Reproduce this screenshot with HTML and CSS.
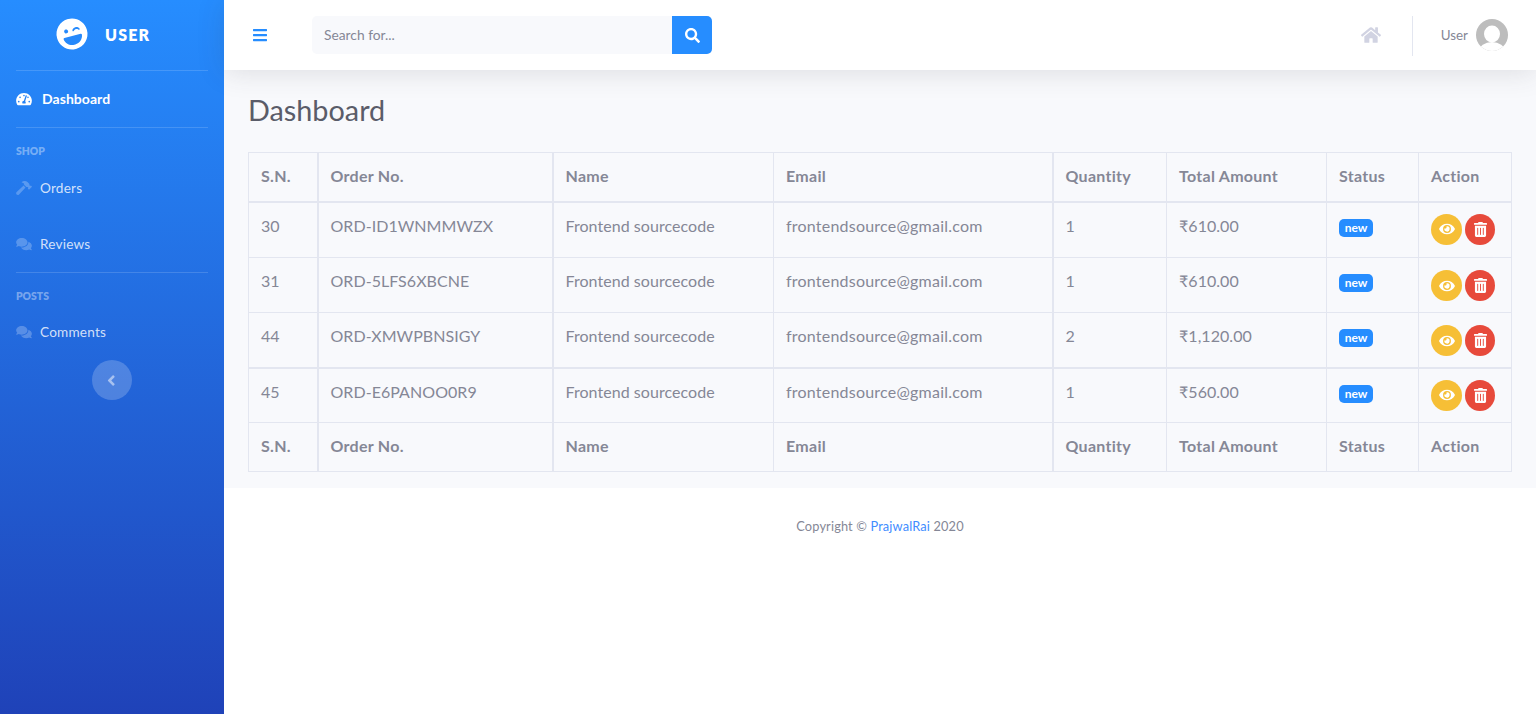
FILE: index.html
```html
<!DOCTYPE html>
<html>
<head>
    <title>Dashboard</title>
    <link rel="stylesheet" href="styles.css">
</head>
<body>
    <svg class="icon-defs" xmlns="http://www.w3.org/2000/svg">
        <symbol id="i-search" viewBox="0 0 512 512"><path d="M505 442.7L405.3 343c-4.5-4.5-10.6-7-17-7H372c27.6-35.3 44-79.7 44-128C416 93.1 322.9 0 208 0S0 93.1 0 208s93.1 208 208 208c48.3 0 92.7-16.4 128-44v16.3c0 6.4 2.5 12.5 7 17l99.7 99.7c9.4 9.4 24.6 9.4 33.9 0l28.3-28.3c9.4-9.4 9.4-24.6.1-34zM208 336c-70.7 0-128-57.2-128-128 0-70.7 57.2-128 128-128 70.7 0 128 57.2 128 128 0 70.7-57.2 128-128 128z"/></symbol>
        <symbol id="i-bars" viewBox="0 0 448 512"><path d="M16 132h416c8.837 0 16-7.163 16-16V76c0-8.837-7.163-16-16-16H16C7.163 60 0 67.163 0 76v40c0 8.837 7.163 16 16 16zm0 160h416c8.837 0 16-7.163 16-16v-40c0-8.837-7.163-16-16-16H16c-8.837 0-16 7.163-16 16v40c0 8.837 7.163 16 16 16zm0 160h416c8.837 0 16-7.163 16-16v-40c0-8.837-7.163-16-16-16H16c-8.837 0-16 7.163-16 16v40c0 8.837 7.163 16 16 16z"/></symbol>
        <symbol id="i-home" viewBox="0 0 576 512"><path d="M280.37 148.26L96 300.11V464a16 16 0 0 0 16 16l112.06-.29a16 16 0 0 0 15.92-16V368a16 16 0 0 1 16-16h64a16 16 0 0 1 16 16v95.64a16 16 0 0 0 16 16.05L464 480a16 16 0 0 0 16-16V300L295.67 148.26a12.19 12.19 0 0 0-15.3 0zM571.6 251.47L488 182.56V44.05a12 12 0 0 0-12-12h-56a12 12 0 0 0-12 12v72.61L318.47 43a48 48 0 0 0-61 0L4.34 251.47a12 12 0 0 0-1.6 16.9l25.5 31A12 12 0 0 0 45.15 301l235.22-193.74a12.19 12.19 0 0 1 15.3 0L530.9 301a12 12 0 0 0 16.9-1.6l25.5-31a12 12 0 0 0-1.7-16.93z"/></symbol>
        <symbol id="i-eye" viewBox="0 0 576 512"><path d="M572.52 241.4C518.29 135.59 410.93 64 288 64S57.68 135.64 3.48 241.41a32.35 32.35 0 0 0 0 29.19C57.71 376.41 165.07 448 288 448s230.32-71.64 284.52-177.41a32.35 32.35 0 0 0 0-29.19zM288 400a144 144 0 1 1 144-144 143.93 143.93 0 0 1-144 144zm0-240a95.31 95.31 0 0 0-25.31 3.79 47.85 47.85 0 0 1-66.9 66.9A95.78 95.78 0 1 0 288 160z"/></symbol>
        <symbol id="i-trash" viewBox="0 0 448 512"><path d="M32 464a48 48 0 0 0 48 48h288a48 48 0 0 0 48-48V128H32zm272-256a16 16 0 0 1 32 0v224a16 16 0 0 1-32 0zm-96 0a16 16 0 0 1 32 0v224a16 16 0 0 1-32 0zm-96 0a16 16 0 0 1 32 0v224a16 16 0 0 1-32 0zM432 32H312l-9.4-18.7A24 24 0 0 0 281.1 0H166.8a23.72 23.72 0 0 0-21.4 13.3L136 32H16A16 16 0 0 0 0 48v32a16 16 0 0 0 16 16h416a16 16 0 0 0 16-16V48a16 16 0 0 0-16-16z"/></symbol>
        <symbol id="i-comments" viewBox="0 0 576 512"><path d="M416 192c0-88.4-93.1-160-208-160S0 103.6 0 192c0 34.3 14.1 65.9 38 92-13.4 30.2-35.5 54.2-35.8 54.5-2.2 2.3-2.8 5.7-1.5 8.7S4.8 352 8 352c36.6 0 66.9-12.3 88.7-25 32.2 15.7 70.3 25 111.3 25 114.9 0 208-71.6 208-160zm122 220c23.9-26 38-57.7 38-92 0-66.9-53.5-124.2-129.3-148.1.9 6.6 1.3 13.3 1.3 20.1 0 105.9-107.7 192-240 192-10.8 0-21.3-.8-31.7-1.9C207.8 439.6 281.8 480 368 480c41 0 79.1-9.2 111.3-25 21.8 12.7 52.1 25 88.7 25 3.2 0 6.1-1.9 7.3-4.8 1.3-2.9.7-6.3-1.5-8.7-.3-.3-22.4-24.2-35.8-54.5z"/></symbol>
    </svg>

    <div class="wrapper">
        <aside class="sidebar">
            <a class="brand">
                <svg class="brand-icon" viewBox="0 0 496 512"><path d="M248 8C111 8 0 119 0 256s111 248 248 248 248-111 248-248S385 8 248 8zm20.1 198.1c4-25.2 34.2-42.1 59.9-42.1s55.9 16.9 59.9 42.1c1.7 11.1-11.4 18.3-19.8 10.8l-9.5-8.5c-14.8-13.2-46.2-13.2-61 0L288 217c-8.4 7.4-21.6.3-19.9-10.9zM168 160c17.7 0 32 14.3 32 32s-14.3 32-32 32-32-14.3-32-32 14.3-32 32-32zm230.9 146C390 377 329.4 432 256 432h-16c-73.4 0-134-55-142.9-126-1.2-9.5 6.3-18 15.9-18h270c9.6 0 17.1 8.4 15.9 18z"/></svg>
                <span class="brand-text">USER</span>
            </a>
            <hr class="side-divider">
            <a class="side-link active">
                <svg class="side-icon" viewBox="0 0 576 512"><path d="M288 32C128.94 32 0 160.94 0 320c0 52.8 14.25 102.26 39.06 144.8 5.61 9.62 16.3 15.2 27.44 15.2h443c11.14 0 21.83-5.58 27.44-15.2C561.75 422.26 576 372.8 576 320c0-159.06-128.94-288-288-288zm0 64c14.71 0 26.58 10.13 30.32 23.65-1.11 2.26-2.64 4.23-3.45 6.67l-9.22 27.67c-5.13 3.49-10.97 6.01-17.64 6.01-17.67 0-32-14.33-32-32S270.33 96 288 96zM96 384c-17.67 0-32-14.33-32-32s14.33-32 32-32 32 14.33 32 32-14.33 32-32 32zm48-160c-17.67 0-32-14.33-32-32s14.33-32 32-32 32 14.33 32 32-14.33 32-32 32zm246.77-72.41l-61.33 184C343.13 347.33 352 364.54 352 384c0 11.72-3.38 22.55-8.88 32H232.88c-5.5-9.45-8.88-20.28-8.88-32 0-33.94 26.5-61.43 59.9-63.59l61.34-184.01c4.17-12.56 17.73-19.45 30.36-15.17 12.57 4.19 19.35 17.79 15.17 30.36zm14.66 57.2l15.52-46.55c3.47-1.29 7.13-2.23 11.05-2.23 17.67 0 32 14.33 32 32s-14.33 32-32 32c-11.38-.01-20.89-6.28-26.57-15.22zM480 384c-17.67 0-32-14.33-32-32s14.33-32 32-32 32 14.33 32 32-14.33 32-32 32z"/></svg>
                <span>Dashboard</span>
            </a>
            <hr class="side-divider">
            <div class="side-heading">SHOP</div>
            <a class="side-link orders">
                <svg class="side-icon" viewBox="0 0 576 512"><path d="M571.31 193.94l-22.63-22.63c-6.25-6.25-16.38-6.25-22.63 0l-11.31 11.31-28.9-28.9c5.63-21.31.36-44.9-16.35-61.61l-45.25-45.25c-62.48-62.48-163.79-62.48-226.28 0l90.51 45.25v18.75c0 16.97 6.74 33.25 18.75 45.25l49.14 49.14c16.71 16.71 40.3 21.98 61.61 16.35l28.9 28.9-11.31 11.31c-6.25 6.25-6.25 16.38 0 22.63l22.63 22.63c6.25 6.25 16.38 6.25 22.63 0l90.51-90.51c6.23-6.24 6.23-16.37-.02-22.62zm-286.72-15.2c-3.7-3.7-6.84-7.79-9.85-11.95L19.64 404.96c-25.57 23.88-26.26 64.19-1.53 88.93s65.05 24.05 88.93-1.53l238.13-255.07c-3.96-2.91-7.9-5.87-11.44-9.41l-49.14-49.14z"/></svg>
                <span>Orders</span>
            </a>
            <a class="side-link">
                <svg class="side-icon"><use href="#i-comments"/></svg>
                <span>Reviews</span>
            </a>
            <hr class="side-divider">
            <div class="side-heading">POSTS</div>
            <a class="side-link comments">
                <svg class="side-icon"><use href="#i-comments"/></svg>
                <span>Comments</span>
            </a>
            <button class="side-toggle">
                <svg viewBox="0 0 256 512"><path d="M31.7 239l136-136c9.4-9.4 24.6-9.4 33.9 0l22.6 22.6c9.4 9.4 9.4 24.6 0 33.9L127.9 256l96.4 96.4c9.4 9.4 9.4 24.6 0 33.9L201.7 409c-9.4 9.4-24.6 9.4-33.9 0l-136-136c-9.5-9.4-9.5-24.6-.1-34z"/></svg>
            </button>
        </aside>

        <div class="main">
            <header class="topbar">
                <svg class="menu-icon"><use href="#i-bars"/></svg>
                <form class="search">
                    <input class="search-input" type="text" placeholder="Search for...">
                    <button class="search-btn" type="button"><svg><use href="#i-search"/></svg></button>
                </form>
                <div class="top-right">
                    <svg class="home-icon"><use href="#i-home"/></svg>
                    <div class="top-divider"></div>
                    <span class="user-name">User</span>
                    <svg class="avatar" viewBox="0 0 32 32">
                        <defs><clipPath id="avatar-clip"><circle cx="16" cy="16" r="16"/></clipPath></defs>
                        <circle cx="16" cy="16" r="16" fill="#bdbdbd"/>
                        <g clip-path="url(#avatar-clip)" fill="#fff">
                            <ellipse cx="16" cy="15" rx="8" ry="8.5"/>
                            <ellipse cx="16" cy="32" rx="13" ry="9"/>
                        </g>
                    </svg>
                </div>
            </header>

            <div class="content">
                <h1 class="page-title">Dashboard</h1>
                <table class="orders-table">
                    <colgroup>
                        <col class="c-sn"><col class="c-order"><col class="c-name"><col class="c-email">
                        <col class="c-qty"><col class="c-total"><col class="c-status"><col class="c-action">
                    </colgroup>
                    <thead>
                        <tr><th>S.N.</th><th>Order No.</th><th>Name</th><th>Email</th><th>Quantity</th><th>Total Amount</th><th>Status</th><th>Action</th></tr>
                    </thead>
                    <tbody>
                        <tr>
                            <td>30</td><td>ORD-ID1WNMMWZX</td><td>Frontend sourcecode</td><td class="email">frontendsource@gmail.com</td><td>1</td><td>₹610.00</td>
                            <td><span class="badge">new</span></td>
                            <td><div class="actions"><a class="btn-round btn-view"><svg><use href="#i-eye"/></svg></a><a class="btn-round btn-del"><svg><use href="#i-trash"/></svg></a></div></td>
                        </tr>
                        <tr>
                            <td>31</td><td>ORD-5LFS6XBCNE</td><td>Frontend sourcecode</td><td class="email">frontendsource@gmail.com</td><td>1</td><td>₹610.00</td>
                            <td><span class="badge">new</span></td>
                            <td><div class="actions"><a class="btn-round btn-view"><svg><use href="#i-eye"/></svg></a><a class="btn-round btn-del"><svg><use href="#i-trash"/></svg></a></div></td>
                        </tr>
                        <tr>
                            <td>44</td><td>ORD-XMWPBNSIGY</td><td>Frontend sourcecode</td><td class="email">frontendsource@gmail.com</td><td>2</td><td>₹1,120.00</td>
                            <td><span class="badge">new</span></td>
                            <td><div class="actions"><a class="btn-round btn-view"><svg><use href="#i-eye"/></svg></a><a class="btn-round btn-del"><svg><use href="#i-trash"/></svg></a></div></td>
                        </tr>
                        <tr>
                            <td>45</td><td>ORD-E6PANOO0R9</td><td>Frontend sourcecode</td><td class="email">frontendsource@gmail.com</td><td>1</td><td>₹560.00</td>
                            <td><span class="badge">new</span></td>
                            <td><div class="actions"><a class="btn-round btn-view"><svg><use href="#i-eye"/></svg></a><a class="btn-round btn-del"><svg><use href="#i-trash"/></svg></a></div></td>
                        </tr>
                    </tbody>
                    <tfoot>
                        <tr><th>S.N.</th><th>Order No.</th><th>Name</th><th>Email</th><th>Quantity</th><th>Total Amount</th><th>Status</th><th>Action</th></tr>
                    </tfoot>
                </table>
            </div>

            <footer class="footer">Copyright © <a class="footer-link">PrajwalRai</a> 2020</footer>
        </div>
    </div>
</body>
</html>
```

FILE: styles.css
```css
* { box-sizing: border-box; }
html, body { height: 100%; }
body { margin: 0; font-family: Lato, "Noto Sans", sans-serif; font-size: 16px; color: #858796; background: #fff; overflow: hidden; }
svg { fill: currentColor; display: block; }
.icon-defs { display: none; }

.wrapper { display: flex; height: 714px; }

/* sidebar */
.sidebar { width: 224px; flex-shrink: 0; padding: 0 16px; display: flex; flex-direction: column; background: linear-gradient(180deg, #268dff 0%, #1f42b8 100%); color: #fff; }
.brand { height: 70px; padding: 0 0 2px 40px; display: flex; align-items: center; gap: 17px; color: #fff; }
.brand-icon { width: 32px; height: 32px; transform: rotate(-15deg); }
.brand-text { font-size: 16px; font-weight: 800; letter-spacing: 1.2px; }
.side-divider { width: 100%; margin: 0; border: 0; border-top: 1px solid rgba(255,255,255,.15); }
.side-link { display: flex; align-items: center; height: 56px; font-size: 13.6px; letter-spacing: .2px; color: rgba(255,255,255,.8); }
.side-link span { margin-left: 8px; }
.side-link.active { color: #fff; font-weight: 700; font-size: 14px; letter-spacing: .05px; }
.side-link.active span { margin-left: 10px; padding-bottom: 2px; }
.side-icon { width: 16px; height: 14px; opacity: .3; flex-shrink: 0; }
.side-link.active .side-icon { opacity: 1; }
.side-heading { font-size: 10.4px; font-weight: 800; color: rgba(255,255,255,.4); padding-top: 17px; line-height: 13px; }
.orders { margin-top: 2px; }
.comments { margin-top: 1px; }
.side-toggle { width: 40px; height: 40px; margin: 0 auto; border: 0; border-radius: 50%; background: rgba(255,255,255,.2); color: rgba(255,255,255,.5); display: flex; align-items: center; justify-content: center; padding: 0 1px 0 0; }
.side-toggle svg { width: 8.5px; height: 17px; }

/* topbar */
.main { flex: 1; display: flex; flex-direction: column; min-width: 0; }
.topbar { height: 70px; flex-shrink: 0; display: flex; align-items: center; background: #fff; padding: 0 28px 0 29px; box-shadow: 0 2px 28px rgba(58,59,69,.15); position: relative; }
.menu-icon { width: 14px; height: 16px; color: #268dff; }
.search { display: flex; width: 400px; height: 38px; margin-left: 45px; }
.search-input { width: 360px; height: 38px; border: 0; outline: 0; background: #f8f9fc; border-radius: 5px 0 0 5px; padding: 0 12px 2px; font-family: inherit; font-size: 13.8px; color: #6e707e; }
.search-input::placeholder { color: #858796; opacity: 1; }
.search-btn { width: 40px; height: 38px; border: 0; padding: 0; background: #268dff; color: #fff; border-radius: 0 5px 5px 0; display: flex; align-items: center; justify-content: center; }
.search-btn svg { width: 15px; height: 15px; }
.top-right { margin-left: auto; display: flex; align-items: center; height: 70px; }
.home-icon { width: 20px; height: 18px; color: #d1d3e2; }
.top-divider { width: 1px; height: 40px; background: #e3e6f0; margin: 1px 28px 0 31px; }
.user-name { font-size: 13.4px; color: #858796; margin-right: 8px; }
.avatar { width: 32px; height: 32px; }

/* content */
.content { background: #f8f9fc; padding: 24px 24px 0; height: 418px; }
.page-title { margin: 0; font-size: 28.8px; font-weight: 400; line-height: 32px; color: #5a5c69; }
.orders-table { width: 1263px; margin-top: 26px; table-layout: fixed; border-collapse: collapse; color: #858796; }
.c-sn { width: 69px; } .c-order { width: 235px; } .c-name { width: 221px; } .c-email { width: 279px; }
.c-qty { width: 114px; } .c-total { width: 160px; } .c-status { width: 92px; } .c-action { width: 93px; }
.orders-table th, .orders-table td { border: 1px solid #e3e6f0; padding: 11px 12px 0; line-height: 24px; text-align: left; vertical-align: top; }
.orders-table th { height: 49px; font-weight: 700; letter-spacing: .28px; }
.orders-table td { height: 55px; letter-spacing: .05px; }
.orders-table td.email { letter-spacing: .22px; }
.orders-table thead th { border-bottom-width: 2px; }
.orders-table tbody tr:first-child td { height: 56px; }
.orders-table tr > :nth-child(2), .orders-table tr > :nth-child(3), .orders-table tr > :nth-child(5) { border-left-width: 2px; }
.orders-table tbody tr:last-child td { border-top-width: 2px; }
.badge { display: block; width: 34px; height: 18px; margin-top: 5px; background: #268dff; color: #fff; font-size: 12px; font-weight: 700; line-height: 17px; letter-spacing: 0; text-align: center; border-radius: 5px; }
.actions { display: flex; gap: 3px; }
tbody tr:nth-child(2) .actions, tbody tr:nth-child(3) .actions { margin-top: 1px; }
.btn-round { width: 31px; height: 31px; border-radius: 50%; display: flex; align-items: center; justify-content: center; color: #fff; }
.btn-view { background: #f6bf36; }
.btn-view svg { width: 16px; height: 14px; }
.btn-del { width: 30px; background: #e74a3b; }
.btn-del svg { width: 13px; height: 15px; }

/* footer */
.footer { padding-top: 30px; text-align: center; font-size: 12.8px; letter-spacing: .14px; color: #858796; line-height: 16px; }
.footer-link { color: #3f8cff; }
```
